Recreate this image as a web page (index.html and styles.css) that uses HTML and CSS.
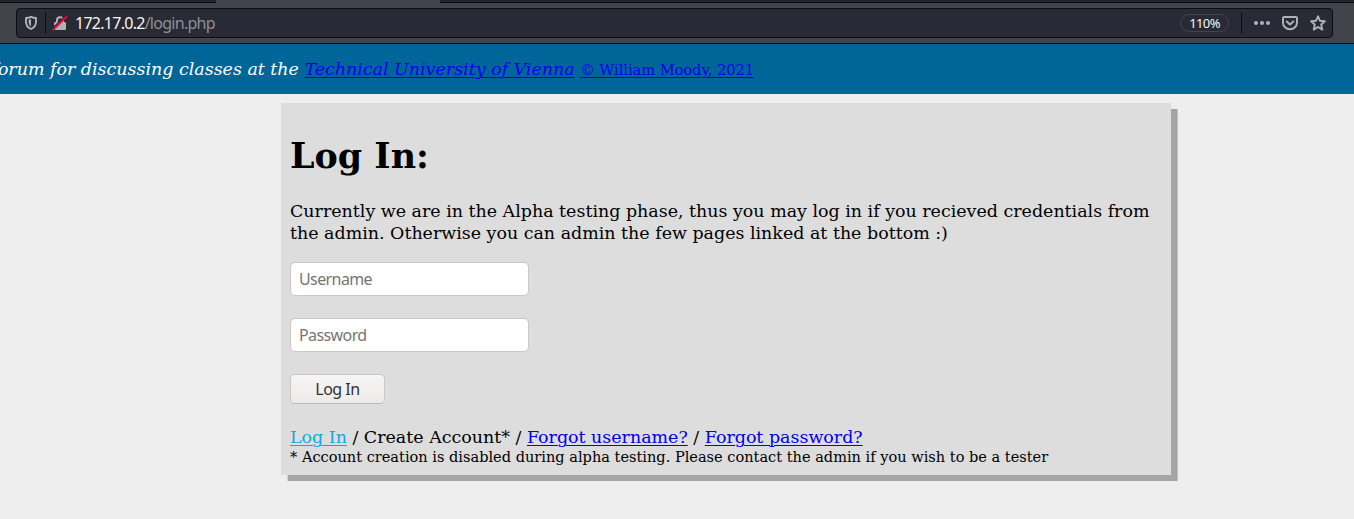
FILE: index.html
```
<!DOCTYPE html>
<html lang="en">
<head>
<meta charset="utf-8">
<title>Log In</title>
<link rel="stylesheet" href="styles.css">
</head>
<body>
<div class="tabs"><span class="tab-active"></span></div>
<div class="toolbar">
  <div class="urlbar">
    <svg class="shield" width="14" height="16" viewBox="0 0 14 16"><path d="M7 1.900C8.500 2.600 10.200 3 12 3v3.700c0 3.400-1.800 5.900-5 7.300-3.200-1.400-5-3.900-5-7.300V3C3.800 3 5.500 2.600 7 1.900z" fill="none" stroke="#b1b1b5" stroke-width="1.900" stroke-linejoin="round"/><path d="M7 4.300v7.200C5.200 10.300 4.600 8.700 4.600 6.500V4.800z" fill="#b1b1b5"/></svg>
    <span class="divider"></span>
    <svg class="lock" width="16" height="16" viewBox="0 0 16 16"><path d="M5 7.500V5.200a3 3 0 0 1 6 0v2.300" fill="none" stroke="#b1b1b5" stroke-width="2"/><rect x="2" y="7" width="12" height="8" rx="1.200" fill="#b1b1b5"/><path d="M.8 13.400 13 1.200" stroke="#282a36" stroke-width="1.600"/><path d="M1.500 14.700 14.400 1.800" stroke="#ff0039" stroke-width="1.900" stroke-linecap="round"/></svg>
    <span class="address"><b class="host">172.17.0.2</b>/login.php</span>
    <span class="zoom">110%</span>
    <span class="divider"></span>
    <svg class="dots" width="16" height="16" viewBox="0 0 16 16" fill="#b1b1b5"><circle cx="2" cy="8" r="2"/><circle cx="8" cy="8" r="2"/><circle cx="14" cy="8" r="2"/></svg>
    <svg class="pocket" width="16" height="16" viewBox="0 0 16 16" fill="none" stroke="#b1b1b5" stroke-width="2" stroke-linecap="round" stroke-linejoin="round"><path d="M2.200 2h11.600c.7 0 1.200.5 1.200 1.200V7.500a7 6.800 0 0 1-14 0V3.200C1 2.500 1.500 2 2.200 2z"/><path d="M4.700 6.500 8 9.500l3.300-3"/></svg>
    <svg class="star" width="16" height="16" viewBox="0 0 16 16" fill="none" stroke="#b1b1b5" stroke-width="1.900" stroke-linejoin="round"><path d="M8 1.300 9.900 5.700 14.900 6.200 11.200 9.500 12.300 14.600 8 12 3.700 14.600 4.800 9.500 1.100 6.200 6.100 5.700z"/></svg>
  </div>
</div>
<header class="banner">
  <div class="ticker"><p class="ticker-text"><i>forum for discussing classes at the <a href="#">Technical University of Vienna</a></i> <a class="small" href="#">© William Moody, 2021</a></p></div>
</header>
<main class="card">
  <h1 class="title">Log In:</h1>
  <p class="intro">Currently we are in the Alpha testing phase, thus you may log in if you recieved credentials from the admin. Otherwise you can admin the few pages linked at the bottom :)</p>
  <form class="form">
    <input class="field" type="text" placeholder="Username">
    <input class="field" type="password" placeholder="Password">
    <button class="submit" type="button">Log In</button>
  </form>
  <div class="links"><a class="current" href="#">Log In</a> / Create Account* / <a href="#">Forgot username?</a> / <a href="#">Forgot password?</a></div>
  <div class="note">* Account creation is disabled during alpha testing. Please contact the admin if you wish to be a tester</div>
</main>
</body>
</html>
```
FILE: styles.css
```
* { box-sizing: border-box; }
body {
  margin: 0;
  height: 519px;
  overflow: hidden;
  background: #eee;
  color: #000;
  font: 17.45px/22px "DejaVu Serif", serif;
}
a { color: #00e; text-decoration-thickness: 1px; text-underline-offset: 2px; }
.tabs { height: 3px; padding-left: 216px; background: #21222c; border-bottom: 1px solid #0c0c11; }
.tab-active { display: block; width: 224px; height: 3px; background: #42444c; position: relative; }
.toolbar { height: 41px; padding: 5px 21px 0 16px; background: #42444c; border-bottom: 1px solid #0c0c0d; }
.urlbar {
  display: flex;
  align-items: center;
  height: 30px;
  padding: 0 6px 0 7px;
  background: #282a36;
  border: 1px solid #0c0c11;
  border-radius: 4px;
}
.divider { width: 1px; height: 22px; background: #0c0c11; }
.shield { margin-right: 7px; }
.lock { margin: 0 7px 0 6px; }
.address { flex: 1; font: 16px/20px "Noto Sans", sans-serif; letter-spacing: -.73px; color: #8f9094; }
.host { font-weight: 400; color: #f8f8f2; }
.zoom {
  width: 49px;
  height: 18px;
  margin-right: 12px;
  border: 1px solid #42444c;
  border-radius: 9px;
  color: #f8f8f2;
  font: 13px/16px "Noto Sans", sans-serif;
  letter-spacing: -.6px;
  text-align: center;
}
.dots { margin: 0 12px; }
.pocket { margin-right: 12px; }
.banner { height: 50px; padding-top: 14px; background: #069; color: #fff; }
.ticker { display: flex; justify-content: flex-end; width: 754px; overflow: hidden; }
.ticker-text { flex: none; margin: 0; white-space: nowrap; }
.small { font-size: 14.55px; }
.card {
  width: 890px;
  height: 372px;
  margin: 9px 0 0 281px;
  padding: 32px 9px 0;
  background: #ddd;
  box-shadow: 6.6px 6px 0 #a5a5a5;
}
.title { margin: 0; font-size: 34.9px; line-height: 41px; }
.intro { margin: 24px 0 18px; }
.form { display: flex; flex-direction: column; align-items: flex-start; gap: 22px; }
.field {
  width: 239px;
  height: 34px;
  padding: 0 8px;
  border: 1px solid #cdc7c2;
  border-radius: 5px;
  background: #fff;
  font: 16px "Noto Sans", sans-serif;
  letter-spacing: -.6px;
}
.field::placeholder { color: #757575; }
.submit {
  width: 95px;
  height: 30px;
  padding: 0;
  border: 1px solid #cdc7c2;
  border-bottom-color: #bfb8b1;
  border-radius: 5px;
  background: linear-gradient(#f6f5f4, #edebe9);
  color: #2e3436;
  font: 16px "Noto Sans", sans-serif;
  letter-spacing: -.5px;
}
.links { margin-top: 22px; }
.current { color: #1ad; }
.note { font-size: 14.55px; line-height: 18px; }
```
